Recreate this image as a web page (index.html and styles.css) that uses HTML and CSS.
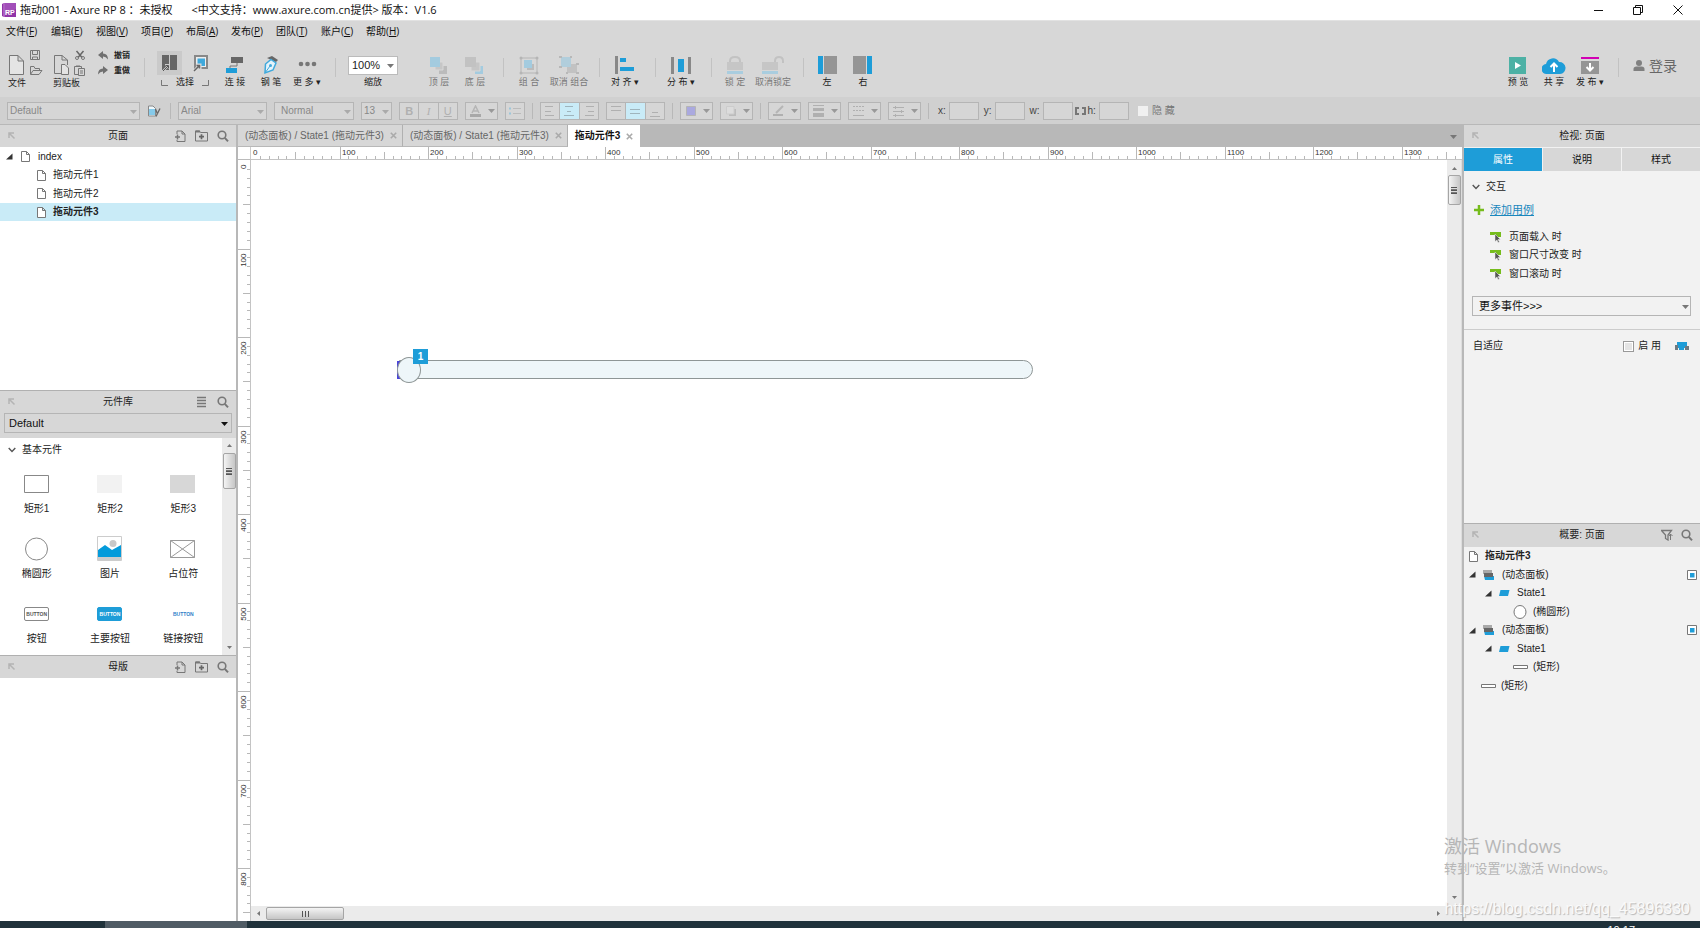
FILE: index.html
```html
<!DOCTYPE html>
<html lang="zh-CN">
<head>
<meta charset="utf-8">
<title>拖动001 - Axure RP 8</title>
<link rel="stylesheet" href="styles.css">
</head>
<body>
<svg class="defs" aria-hidden="true">
  <symbol id="page" viewBox="0 0 9 11"><path d="M.5.5H5.500L8.500 3.500V10.500H.5ZM5.500.5V3.500H8.500" fill="#fff" stroke="#777"/></symbol>
  <symbol id="pin" viewBox="0 0 8 8"><path d="M1 6V1H6M1.500 1.500L6.500 6.500" fill="none" stroke="#b4b4b4" stroke-width="1.500"/></symbol>
  <symbol id="search" viewBox="0 0 12 12"><circle cx="5" cy="5" r="3.800" fill="none" stroke="#777" stroke-width="1.600"/><path d="M7.800 7.800L11 11.300" stroke="#777" stroke-width="2"/></symbol>
  <symbol id="addpage" viewBox="0 0 12 12"><path d="M3 4V1H8L11 4V11.500H3V10M8 1V4H11" fill="none" stroke="#777"/><path d="M3.500 4.500V9.500M1 7H6" stroke="#777" stroke-width="1.500"/></symbol>
  <symbol id="addfolder" viewBox="0 0 13 12"><path d="M.5 11V1H4.500L5.500 2.500H12.500V11Z" fill="none" stroke="#777"/><path d="M.5 1.500H5" stroke="#777" stroke-width="2"/><path d="M6.500 4.200V9.200M4 6.700H9" stroke="#666" stroke-width="1.700"/></symbol>
  <symbol id="tri" viewBox="0 0 7 7"><path d="M6.500.5V6.500H0Z" fill="#333"/></symbol>
  <symbol id="chev" viewBox="0 0 8 6"><path d="M.7 1L4 4.500L7.300 1" fill="none" stroke="#555" stroke-width="1.400"/></symbol>
  <symbol id="down" viewBox="0 0 7 4"><path d="M0 0H7L3.500 4Z" fill="currentColor"/></symbol>
  <symbol id="panel" viewBox="0 0 12 10"><path d="M1 6H11V10H2Z" fill="#1e9dd8"/><path d="M0 0H9V4H0Z" fill="#aaa"/><path d="M1 3H10V7H1Z" fill="#666"/></symbol>
  <symbol id="state" viewBox="0 0 11 6"><path d="M1.500 0H10.500L9 6H0Z" fill="#1e9dd8"/></symbol>
  <symbol id="bar" viewBox="0 0 15 4"><path d="M.5.5H14.500V3.500H.5Z" fill="#fff" stroke="#777"/></symbol>
  <symbol id="event" viewBox="0 0 12 12"><path d="M0 1H11V6H6L5 4H0Z" fill="#76bc1c"/><path d="M5 3L10.500 8.500H8L9.500 11L8 11.500L7 9L5 10.500Z" fill="#555" stroke="#eee" stroke-width=".5"/></symbol>
  <symbol id="close" viewBox="0 0 7 7"><path d="M.8.8L6.200 6.200M6.200.8L.8 6.200" stroke="#aaa" stroke-width="1.600"/></symbol>
  <symbol id="shown" viewBox="0 0 10 10"><path d="M.5.5H9.500V9.500H.5Z" fill="#fff" stroke="#777"/><path d="M3 3H7.500V7.500H3Z" fill="#1e9dd8"/></symbol>
</svg>

<header class="titlebar">
  <svg class="logo" width="15" height="15" viewBox="0 0 15 15"><path d="M0 1L2 0H14V14H2L0 13Z" fill="#9034a8"/><path d="M2 0V14" stroke="#c98ad8"/><path d="M3 0H14V6L3 12Z" fill="#a24fb9"/><text x="3" y="12" class="logo-text">RP</text></svg>
  <span class="app-name">拖动001 - Axure RP 8 ：未授权</span>
  <span>&lt;中文支持：www.axure.com.cn提供&gt; 版本：V1.6</span>
  <div class="window-buttons">
    <button aria-label="最小化"><svg width="10" height="10"><path d="M1 5.500H10" stroke="#111"/></svg></button>
    <button aria-label="还原"><svg width="10" height="10"><path d="M.5 2.500H7.500V9.500H.5ZM2.500 2V.5H9.500V7.500H8" fill="none" stroke="#111"/></svg></button>
    <button aria-label="关闭"><svg width="10" height="10"><path d="M.5.5L9.500 9.500M9.500.5L.5 9.500" stroke="#111"/></svg></button>
  </div>
</header>

<nav class="menubar">
  <button>文件(<u>F</u>)</button><button>编辑(<u>E</u>)</button><button>视图(<u>V</u>)</button><button>项目(<u>P</u>)</button><button>布局(<u>A</u>)</button><button>发布(<u>P</u>)</button><button>团队(<u>T</u>)</button><button>账户(<u>C</u>)</button><button>帮助(<u>H</u>)</button>
</nav>

<div class="toolbar">
  <div class="file-group">
    <svg width="35" height="27" viewBox="0 0 35 27"><g fill="none" stroke="#777"><path d="M1.500 5.500H10L15.500 11V24.500H1.500ZM10 5.500V11H15.500" fill="#e4e4e4"/><path d="M22.500.5H31.500V9.500H22.500ZM24.500.5V4.500H29.500V.5M24.500 9V7H29.500V9"/><path d="M22.500 24V16.500H26L27 18.500H31.500V20.500M22.500 24.500L25 20.500H34L31 24.500Z"/></g></svg>
    <span>文件</span>
  </div>
  <div class="file-group">
    <svg width="35" height="27" viewBox="0 0 35 27"><g fill="none" stroke="#777"><path d="M1.500 5.500H9L14.500 10V15M8 23.500H1.500V5.500M9 5.500V10H14.500" /><path d="M8.500 14.500H12L15.500 18V24.500H8.500Z" fill="#e4e4e4"/><path d="M23.500 1L29 7.500M30.500 1L25 7.500" stroke="#666" stroke-width="1.500"/><circle cx="24" cy="8" r="1.500"/><circle cx="30" cy="8" r="1.500"/><path d="M25 24.500H21.500V16.500H28.500V18M25.500 18.500H31.500V25.500H25.500ZM27 21H30M27 23H30M23 16H27"/></g></svg>
    <span>剪贴板</span>
  </div>
  <div class="undo-group">
    <button><svg width="11" height="9"><path d="M0 4L5 0V2.500Q10 2.500 10 8.500Q8 5.500 5 5.500V8Z" fill="#707070"/></svg>撤销</button>
    <button><svg width="11" height="9"><path d="M10 4L5 0V2.500Q0 2.500 0 8.500Q2 5.500 5 5.500V8Z" fill="#707070"/></svg>重做</button>
  </div>
  <i class="sep"></i>
  <div class="select-group">
    <div class="modes">
      <button class="active" aria-label="相交选择"><svg width="16" height="18"><path d="M0 1H7V16H0Z" fill="#666"/><path d="M8 1H15V16H8Z" fill="#666"/><path d="M1 17L6 12M3 11H7V15" fill="none" stroke="#ccc" stroke-width="2"/><path d="M1 17L6 12M3.500 11.500H6.500V14.500" fill="none" stroke="#555"/></svg></button>
      <button aria-label="包含选择"><svg width="16" height="18"><path d="M2 2H14V14H2Z" fill="#eee" stroke="#888" stroke-width="2"/><path d="M4.500 4.500H12V12H4.500Z" fill="#3fa9dc"/><path d="M1 17L6 12M3 11H7V15" fill="none" stroke="#ddd" stroke-width="3"/><path d="M1 17L6 12M3.500 11.500H6.500V14.500" fill="none" stroke="#666" stroke-width="1.500"/></svg></button>
    </div>
    <div class="bracket"><svg width="7" height="6"><path d="M.5 0V5.500H7" fill="none" stroke="#777"/></svg><span>选择</span><svg width="7" height="6"><path d="M0 5.500H6.500V0" fill="none" stroke="#777"/></svg></div>
  </div>
  <button class="tool"><svg width="20" height="20"><path d="M6 1H18V7H6Z" fill="#666"/><path d="M12 7V10H5V12" fill="none" stroke="#777"/><path d="M1 12H12V17H1Z" fill="#1e9dd8"/></svg><span>连 接</span></button>
  <button class="tool"><svg width="20" height="20"><path d="M6 2L11 0L17 4L15 6Z" fill="#666"/><path d="M10 3.500L15 7L12 14L4 17L4.500 8Z" fill="#e5f3fa" stroke="#3fa9dc" stroke-width="1.500"/><path d="M4 17L9 10" stroke="#3fa9dc"/><circle cx="9.500" cy="9.500" r="1.500" fill="#3fa9dc"/></svg><span>钢 笔</span></button>
  <button class="tool"><svg width="20" height="20"><g fill="#777"><circle cx="4" cy="8" r="2.300"/><circle cx="10.500" cy="8" r="2.300"/><circle cx="17" cy="8" r="2.300"/></g></svg><span>更 多 ▾</span></button>
  <i class="sep"></i>
  <label class="zoom"><select><option>100%</option></select><svg class="caret" width="7" height="4"><use href="#down"/></svg><span>缩放</span></label>
  <button class="tool off order-first" disabled><svg width="20" height="20"><path d="M10 10H18V18H10Z" fill="#bbb"/><path d="M6 6H14V14H6Z" fill="#c6c6c6" stroke="#d8d8d8"/><path d="M1 1H11V11H1Z" fill="#a3cbdf"/></svg><span>顶 层</span></button>
  <button class="tool off" disabled><svg width="20" height="20"><path d="M10 10H18V18H10Z" fill="#a3cbdf"/><path d="M6 6H15V15H6Z" fill="#c6c6c6" stroke="#d8d8d8"/><path d="M0 1H11V11H0Z" fill="#c2c2c2"/></svg><span>底 层</span></button>
  <i class="sep"></i>
  <button class="tool wide off" disabled><svg width="20" height="20"><path d="M2 2H18V17H2Z" fill="none" stroke="#b5b5b5"/><path d="M8 8H15V14H8Z" fill="#bbb"/><path d="M5 4H13V12H5Z" fill="#a3cbdf"/><g fill="#b5b5b5"><circle cx="2" cy="2" r="1.500"/><circle cx="18" cy="2" r="1.500"/><circle cx="2" cy="17" r="1.500"/><circle cx="18" cy="17" r="1.500"/></g></svg><span>组 合</span></button>
  <button class="tool wide off" disabled><svg width="20" height="20"><path d="M8 8H18V17H8Z" fill="#c2c2c2"/><path d="M2 1H12V11H2Z" fill="#b1cedc"/><g fill="#b8b8b8"><path d="M0 0H3V2H0ZM11 0H13V2H11ZM0 10H3V12H0ZM17 7H20V9H17ZM17 16H20V18H17ZM7 16H9V18H7Z"/></g></svg><span>取消 组合</span></button>
  <i class="sep"></i>
  <button class="tool wide"><svg width="20" height="20"><path d="M0 0H3V18H0Z" fill="#888"/><path d="M5 2H11V6H5ZM5 11H19V15H5Z" fill="#1e9dd8"/></svg><span>对 齐 ▾</span></button>
  <i class="sep"></i>
  <button class="tool wide"><svg width="20" height="20"><path d="M0 1H3V18H0ZM17 1H20V18H17Z" fill="#888"/><path d="M7 3H13V16H7Z" fill="#1e9dd8"/></svg><span>分 布 ▾</span></button>
  <i class="sep"></i>
  <button class="tool off" disabled><svg width="20" height="20"><path d="M5 7V5Q5 1 10 1T15 5V7" fill="none" stroke="#c2c2c2" stroke-width="2"/><path d="M2 6H18V14H2Z" fill="#c6c6c6"/><path d="M2 15H18V18H2Z" fill="#a9cddf"/></svg><span>锁 定</span></button>
  <button class="tool wide off" disabled><svg width="22" height="20"><path d="M13 7V5Q13 1 17 1T21 5V7" fill="none" stroke="#c2c2c2" stroke-width="2"/><path d="M0 6H16V14H0Z" fill="#c6c6c6"/><path d="M0 15H16V18H0Z" fill="#a9cddf"/></svg><span>取消锁定</span></button>
  <i class="sep"></i>
  <button class="tool"><svg width="20" height="20"><path d="M1 0H6V18H1Z" fill="#1e9dd8"/><path d="M7 0H20V18H7Z" fill="#959595"/></svg><span>左</span></button>
  <button class="tool"><svg width="20" height="20"><path d="M14 0H19V18H14Z" fill="#1e9dd8"/><path d="M0 0H13V18H0Z" fill="#959595"/></svg><span>右</span></button>
  <div class="publish">
    <button class="tool"><svg width="18" height="20"><path d="M0 1H17V18H0Z" fill="#4db1a5"/><path d="M6 6L12 9.500L6 13Z" fill="#fff"/></svg><span>预 览</span></button>
    <button class="tool"><svg width="24" height="20"><path d="M5 18A5 5 0 0 1 4 8A7 7 0 0 1 17 6A6 6 0 0 1 18 18Z" fill="#1e9dd8"/><path d="M12 16V8M8.500 11L12 7.500L15.500 11" fill="none" stroke="#fff" stroke-width="2"/></svg><span>共 享</span></button>
    <button class="tool"><svg width="18" height="20"><path d="M0 1H18V3H0Z" fill="#d200b4"/><path d="M0 5H18V18H0Z" fill="#959595"/><path d="M9 7V14M5.500 11L9 14.500L12.500 11" fill="none" stroke="#fff" stroke-width="2"/></svg><span>发 布 ▾</span></button>
    <i class="sep"></i>
    <button class="login"><svg width="12" height="12"><circle cx="6" cy="3" r="3" fill="#808080"/><path d="M.5 11V9Q.5 6.500 3.500 6.500H8.500Q11.500 6.500 11.500 9V11Z" fill="#808080"/></svg>登录</button>
  </div>
</div>

<div class="stylebar">
  <span class="pick w-style"><select disabled aria-label="样式"><option>Default</option></select><svg class="caret" width="7" height="4"><use href="#down"/></svg></span>
  <button class="bare" aria-label="管理样式"><svg width="14" height="12"><path d="M1.500 1H6L8.500 3.500V11H1.500Z" fill="#eef7fb" stroke="#888"/><path d="M2 5H8M2 7H8M2 9H8" stroke="#1e9dd8"/><path d="M8.500 4L10.500 9M13 3.500L9 11.500" stroke="#666" stroke-width="1.300"/></svg></button>
  <i class="sep"></i>
  <span class="pick w-font"><select disabled aria-label="字体"><option>Arial</option></select><svg class="caret" width="7" height="4"><use href="#down"/></svg></span>
  <span class="pick w-weight"><select disabled aria-label="字形"><option>Normal</option></select><svg class="caret" width="7" height="4"><use href="#down"/></svg></span>
  <span class="pick w-size"><select disabled aria-label="字号"><option>13</option></select><svg class="caret" width="7" height="4"><use href="#down"/></svg></span>
  <div class="trio"><button disabled><b>B</b></button><button disabled><em>I</em></button><button disabled><u>U</u></button></div>
  <button class="drop" disabled aria-label="文字颜色"><svg width="12" height="12"><path d="M2 8L5.500 1L9 8M3.500 6H8" fill="none" stroke="#b5b5b5" stroke-width="1.500"/><path d="M0 9H11V12H0Z" fill="#a8a8a8"/></svg><svg width="7" height="4"><use href="#down"/></svg></button>
  <button class="box" disabled aria-label="项目符号"><svg width="12" height="10"><path d="M4 2.500H12M4 7.500H12" stroke="#bbb"/><path d="M0 2.500H2M0 7.500H2" stroke="#9cc6da" stroke-width="2"/></svg></button>
  <i class="sep"></i>
  <div class="trio">
    <button disabled aria-label="左对齐"><svg width="12" height="12"><path d="M1 1.500H9M1 6.500H7M1 10.500H10" stroke="#b0b0b0"/></svg></button>
    <button disabled class="on" aria-label="居中"><svg width="12" height="12"><path d="M2 1.500H10M4 6.500H8M1 10.500H11" stroke="#9fb4bc"/></svg></button>
    <button disabled aria-label="右对齐"><svg width="12" height="12"><path d="M3 1.500H11M5 6.500H11M2 10.500H11" stroke="#b0b0b0"/></svg></button>
  </div>
  <div class="trio">
    <button disabled aria-label="顶部对齐"><svg width="12" height="12"><path d="M1 1.500H11M1 5.500H11" stroke="#b0b0b0"/></svg></button>
    <button disabled class="on" aria-label="垂直居中"><svg width="12" height="12"><path d="M1 4.500H11M1 8.500H11" stroke="#9fb4bc"/></svg></button>
    <button disabled aria-label="底部对齐"><svg width="12" height="12"><path d="M3 7.500H9M1 11.500H11" stroke="#b0b0b0"/></svg></button>
  </div>
  <i class="sep"></i>
  <button class="drop" disabled aria-label="填充"><svg width="12" height="12"><path d="M1.500 1.500H10.500V10.500H1.500Z" fill="#aaa9df" stroke="#b5b5b5"/></svg><svg width="7" height="4"><use href="#down"/></svg></button>
  <button class="drop" disabled aria-label="阴影"><svg width="12" height="12"><path d="M4 4H11V11H4Z" fill="#bcbcbc"/><path d="M1.500 1.500H9V9H1.500Z" fill="#dcdcdc" stroke="#ccc"/></svg><svg width="7" height="4"><use href="#down"/></svg></button>
  <i class="sep"></i>
  <button class="drop" disabled aria-label="线条颜色"><svg width="12" height="12"><path d="M3 8L10 1" stroke="#b5b5b5" stroke-width="2"/><path d="M0 9H10V11H0Z" fill="#b0b0b0"/></svg><svg width="7" height="4"><use href="#down"/></svg></button>
  <button class="drop" disabled aria-label="线宽"><svg width="12" height="12"><path d="M0 0H11V1H0ZM0 3H11V6H0ZM0 8H11V12H0Z" fill="#b0b0b0"/></svg><svg width="7" height="4"><use href="#down"/></svg></button>
  <button class="drop" disabled aria-label="线型"><svg width="12" height="12"><path d="M0 1.500H11M0 5.500H11" stroke="#b0b0b0" stroke-dasharray="2 1"/><path d="M0 10.500H11" stroke="#b0b0b0"/></svg><svg width="7" height="4"><use href="#down"/></svg></button>
  <button class="drop" disabled aria-label="箭头"><svg width="12" height="12"><path d="M0 2.500H11M0 6.500H11M0 10.500H11M2.500 1V4M8.500 5V8M2.500 9V12" stroke="#b0b0b0"/></svg><svg width="7" height="4"><use href="#down"/></svg></button>
  <i class="sep"></i>
  <div class="coords">
    <label>x:<input disabled></label><label>y:<input disabled></label><label>w:<input disabled></label>
    <svg width="11" height="8"><path d="M4 1H1V7H4M7 1H10V7H7" fill="none" stroke="#777" stroke-width="2"/></svg>
    <label>h:<input disabled></label>
  </div>
  <label class="hide-opt"><input type="checkbox" disabled>隐 藏</label>
</div>

<main class="workspace">
  <aside class="left">
    <section class="pages">
      <div class="panel-head"><svg width="8" height="8"><use href="#pin"/></svg><h2>页面</h2><div class="acts"><button aria-label="添加页面"><svg width="12" height="12"><use href="#addpage"/></svg></button><button aria-label="添加文件夹"><svg width="13" height="12"><use href="#addfolder"/></svg></button><button aria-label="搜索"><svg width="12" height="12"><use href="#search"/></svg></button></div></div>
      <ul class="tree">
        <li><svg width="7" height="7"><use href="#tri"/></svg><svg width="9" height="11"><use href="#page"/></svg>index</li>
        <li class="child"><svg width="9" height="11"><use href="#page"/></svg>拖动元件1</li>
        <li class="child"><svg width="9" height="11"><use href="#page"/></svg>拖动元件2</li>
        <li class="child current"><svg width="9" height="11"><use href="#page"/></svg>拖动元件3</li>
      </ul>
    </section>
    <section class="library">
      <div class="panel-head"><svg width="8" height="8"><use href="#pin"/></svg><h2>元件库</h2><div class="acts"><button aria-label="菜单"><svg width="12" height="12"><path d="M1 1.500H10M1 4.500H10M1 7.500H10M1 10.500H10" stroke="#777" stroke-width="1.500"/></svg></button><button aria-label="搜索"><svg width="12" height="12"><use href="#search"/></svg></button></div></div>
      <div class="lib-pick"><select aria-label="元件库"><option>Default</option></select><svg class="caret" width="7" height="4"><use href="#down"/></svg></div>
      <div class="lib-body">
        <div class="lib-main">
          <h3><svg width="8" height="6"><use href="#chev"/></svg>基本元件</h3>
          <div class="widgets">
            <div><svg width="26" height="26"><path d="M.5 4.500H24.500V21.500H.5Z" fill="#fff" stroke="#888"/></svg>矩形1</div>
            <div><svg width="26" height="26"><path d="M0 4H25V22H0Z" fill="#f2f2f2"/></svg>矩形2</div>
            <div><svg width="26" height="26"><path d="M0 4H25V22H0Z" fill="#d7d7d7"/></svg>矩形3</div>
            <div><svg width="26" height="26"><circle cx="12.500" cy="13" r="11" fill="#fff" stroke="#888"/></svg>椭圆形</div>
            <div><svg width="26" height="26"><path d="M.5.5H24.500V24.500H.5Z" fill="#fff" stroke="#ccc"/><path d="M1 21H24V25H1Z" fill="#ccc"/><circle cx="16" cy="7.500" r="3.500" fill="#c8c8c8"/><path d="M1 14L8 9L15 14L24 9V21H1Z" fill="#049bdb"/></svg>图片</div>
            <div><svg width="26" height="26"><path d="M.5 4.500H24.500V21.500H.5ZM.5 4.500L24.500 21.500M24.500 4.500L.5 21.500" fill="#fff" stroke="#999"/></svg>占位符</div>
            <div><span class="mini">BUTTON</span>按钮</div>
            <div><span class="mini primary">BUTTON</span>主要按钮</div>
            <div><span class="mini link">BUTTON</span>链接按钮</div>
          </div>
        </div>
        <div class="scroll-v"><svg width="5" height="4"><path d="M0 4H5L2.500 1Z" fill="#777"/></svg><span class="thumb"></span><svg class="end" width="5" height="4"><path d="M0 0H5L2.500 3Z" fill="#777"/></svg></div>
      </div>
    </section>
    <section class="masters">
      <div class="panel-head"><svg width="8" height="8"><use href="#pin"/></svg><h2>母版</h2><div class="acts"><button aria-label="添加母版"><svg width="12" height="12"><use href="#addpage"/></svg></button><button aria-label="添加文件夹"><svg width="13" height="12"><use href="#addfolder"/></svg></button><button aria-label="搜索"><svg width="12" height="12"><use href="#search"/></svg></button></div></div>
    </section>
  </aside>

  <section class="editor">
    <div class="tabs">
      <button>(动态面板) / State1 (拖动元件3)<svg width="7" height="7"><use href="#close"/></svg></button>
      <button>(动态面板) / State1 (拖动元件3)<svg width="7" height="7"><use href="#close"/></svg></button>
      <button class="open">拖动元件3<svg width="7" height="7"><use href="#close"/></svg></button>
      <svg class="tab-menu" width="7" height="4"><use href="#down"/></svg>
    </div>
    <div class="stage">
      <div class="corner"></div>
      <div class="ruler-h"><svg id="ruler-h"></svg></div>
      <div class="ruler-v"><svg id="ruler-v"></svg></div>
      <div class="canvas">
        <div class="track"></div>
        <div class="focus-mark"></div>
        <div class="knob-bg"><div class="knob"></div></div>
        <span class="badge">1</span>
      </div>
      <div class="scroll-v tall"><svg width="5" height="4"><path d="M0 4H5L2.500 1Z" fill="#777"/></svg><span class="thumb"></span><svg class="end" width="5" height="4"><path d="M0 0H5L2.500 3Z" fill="#777"/></svg></div>
      <div class="scroll-h"><svg width="4" height="5"><path d="M4 0V5L1 2.500Z" fill="#777"/></svg><span class="thumb"></span><svg class="end" width="4" height="5"><path d="M0 0V5L3 2.500Z" fill="#777"/></svg></div>
    </div>
  </section>

  <aside class="right">
    <section class="inspector">
      <div class="panel-head"><svg width="8" height="8"><use href="#pin"/></svg><h2>检视: 页面</h2></div>
      <div class="modes-tabs"><button class="open">属性</button><button>说明</button><button>样式</button></div>
      <h3><svg width="8" height="6"><use href="#chev"/></svg>交互</h3>
      <div class="add-case"><svg width="10" height="10"><path d="M5 0V10M0 5H10" stroke="#76bc1c" stroke-width="2.500"/></svg><a href="#">添加用例</a></div>
      <ul class="events">
        <li><svg width="12" height="12"><use href="#event"/></svg>页面载入 时</li>
        <li><svg width="12" height="12"><use href="#event"/></svg>窗口尺寸改变 时</li>
        <li><svg width="12" height="12"><use href="#event"/></svg>窗口滚动 时</li>
      </ul>
      <div class="more-events"><select aria-label="更多事件"><option>更多事件&gt;&gt;&gt;</option></select><svg class="caret" width="7" height="4"><use href="#down"/></svg></div>
      <div class="adaptive"><span>自适应</span><label><input type="checkbox">启 用</label><svg width="14" height="9"><path d="M2 0H12V6H9V8H4V6H2Z" fill="#1e9dd8"/><path d="M0 3H3V8H0ZM10 4H14V8H10Z" fill="#707a80"/></svg></div>
    </section>
    <section class="outline">
      <div class="panel-head"><svg width="8" height="8"><use href="#pin"/></svg><h2>概要: 页面</h2><div class="acts"><button aria-label="筛选"><svg width="12" height="12"><path d="M.5 1.500H10.500L7 6V11L4.500 9.500V6Z" fill="none" stroke="#777" stroke-width="1.300"/><path d="M9.500 11V5M8 7L9.500 5L11.500 7" fill="none" stroke="#777"/></svg></button><button aria-label="搜索"><svg width="12" height="12"><use href="#search"/></svg></button></div></div>
      <ul class="tree">
        <li><svg width="9" height="11"><use href="#page"/></svg><b>拖动元件3</b></li>
        <li><svg width="7" height="7"><use href="#tri"/></svg><svg width="12" height="10"><use href="#panel"/></svg>(动态面板)<svg class="shown" width="10" height="10"><use href="#shown"/></svg></li>
        <li class="l2"><svg width="7" height="7"><use href="#tri"/></svg><svg width="11" height="6"><use href="#state"/></svg>State1</li>
        <li class="l3"><svg width="15" height="14"><ellipse cx="7" cy="7" rx="6" ry="6.500" fill="#fff" stroke="#777"/></svg>(椭圆形)</li>
        <li><svg width="7" height="7"><use href="#tri"/></svg><svg width="12" height="10"><use href="#panel"/></svg>(动态面板)<svg class="shown" width="10" height="10"><use href="#shown"/></svg></li>
        <li class="l2"><svg width="7" height="7"><use href="#tri"/></svg><svg width="11" height="6"><use href="#state"/></svg>State1</li>
        <li class="l3"><svg width="15" height="4"><use href="#bar"/></svg>(矩形)</li>
        <li class="l1"><svg width="15" height="4"><use href="#bar"/></svg>(矩形)</li>
      </ul>
    </section>
  </aside>
</main>

<footer class="taskbar"><div class="task"></div><time>10:17</time></footer>
<div class="activate"><p>激活 Windows</p><small>转到“设置”以激活 Windows。</small></div>
<div class="credit">https://blog.csdn.net/qq_45896330</div>
<script src="ruler.js"></script>
</body>
</html>
```
FILE: styles.css
```css
* { box-sizing: border-box; }
body {
  margin: 0; height: 100vh; display: flex; flex-direction: column; overflow: hidden;
  background: #d7d7d7; color: #222;
  font: 10px/14px "Liberation Sans", "Noto Sans CJK SC", sans-serif;
}
button, input, select { font: inherit; color: inherit; margin: 0; }
button { border: 0; padding: 0; background: none; white-space: nowrap; }
select { appearance: none; border: 0; border-radius: 0; background: none; width: 100%; padding: 0; opacity: 1; }
svg { display: block; flex: none; }
ul, h2, h3, p { margin: 0; padding: 0; list-style: none; font-size: inherit; font-weight: normal; }
.defs { position: absolute; width: 0; height: 0; }

.titlebar {
  flex: none; height: 21px; display: flex; align-items: center; padding-left: 2px;
  background: #fff; border-bottom: 1px solid #e2e2e2; color: #111; white-space: pre;
  font: 11px/20px "Open Sans", "Noto Sans CJK SC", sans-serif;
}
.logo { margin-right: 3px; }
.logo-text { font: bold 7px "Liberation Sans", sans-serif; fill: #fff; }
.app-name { margin-right: 19px; }
.window-buttons { margin-left: auto; padding-right: 2px; display: flex; }
.window-buttons button { width: 40px; display: flex; justify-content: center; }

.menubar { flex: none; display: flex; height: 20px; align-items: center; padding-left: 6px; gap: 11px; color: #111; font-family: "Open Sans", "Noto Sans CJK SC", sans-serif; }
.menubar button { width: 34px; text-align: left; }

.toolbar { flex: none; display: flex; align-items: flex-start; height: 56px; padding: 9px 23px 0 8px; font-size: 9px; line-height: 11px; color: #222; }
.file-group { width: 35px; margin-right: 10px; }
.file-group span { display: block; margin-top: 1px; }
.undo-group { width: 36px; display: flex; flex-direction: column; gap: 4px; }
.undo-group button { display: flex; align-items: center; gap: 5px; font-size: 8px; line-height: 11px; font-weight: bold; }
.sep { flex: none; width: 1px; height: 19px; background: #c2c2c2; }
.toolbar .sep { margin: 8px 5px 0 10px; }
.select-group { width: 60px; padding: 1px 4px 0 0; margin-left: 7px; }
.modes { display: flex; gap: 6px; }
.modes button { width: 26px; height: 24px; display: grid; place-items: center; }
.modes .active { background: #cacaca; }
.bracket { display: flex; align-items: center; justify-content: space-between; padding: 2px 4px 0; }
.tool { width: 36px; padding-top: 6px; display: flex; flex-direction: column; align-items: center; }
.tool span { margin-top: 1px; line-height: 11px; }
.tool.wide { width: 40px; }
.tool.off { color: #777; }
.order-first { margin-left: 23px; }
.zoom { position: relative; width: 50px; margin: 6px 0 0 7px; text-align: center; }
.zoom select { height: 19px; padding-left: 3px; background: #fff; border: 1px solid #bbb; font-size: 11px; display: block; }
.zoom span { display: block; margin-top: 2px; }
.caret { position: absolute; right: 4px; top: 8px; color: #777; pointer-events: none; }
.publish { margin-left: auto; display: flex; align-items: flex-start; }
.login { display: flex; align-items: center; gap: 4px; margin: 7px 0 0 9px; font-size: 14px; line-height: 18px; color: #666; }

.stylebar { flex: none; height: 28px; display: flex; align-items: center; gap: 7px; padding: 0 7px; background: #d0d0d0; border-bottom: 1px solid #b8b8b8; color: #999; }
.stylebar .sep { height: 16px; background: #b8b8b8; }
.pick { position: relative; height: 18px; border: 1px solid #b5b5b5; background: #d6d6d6; color: #888; }
.pick select { height: 16px; padding-left: 2px; display: block; }
.pick .caret { top: 7px; right: 2px; color: #aaa; }
.w-style { width: 133px; }
.w-font { width: 89px; }
.w-weight { width: 80px; }
.w-weight select { padding-left: 6px; }
.w-size { width: 31px; }
.bare { width: 16px; }
.trio { display: flex; border: 1px solid #b5b5b5; height: 18px; background: #d6d6d6; width: 59px; }
.trio button { flex: 1; display: grid; place-items: center; color: #b0b0b0; font-size: 11px; }
.trio button + button { border-left: 1px solid #b5b5b5; }
.trio .on { background: #c9ebf7; }
.trio em { font-family: "Liberation Serif", serif; }
.drop { width: 33px; height: 18px; border: 1px solid #b5b5b5; background: #d6d6d6; display: flex; align-items: center; justify-content: space-between; padding: 0 2px 0 4px; color: #999; }
.box { width: 20px; height: 18px; border: 1px solid #b5b5b5; background: #d6d6d6; display: grid; place-items: center; }
.coords { display: flex; align-items: center; gap: 5px; padding-left: 2px; color: #444; }
.coords label { display: flex; align-items: center; gap: 3px; }
.coords input { width: 30px; height: 18px; border: 1px solid #b5b5b5; background: #d6d6d6; padding: 0; }
.coords svg { margin: 0 -3px; }
.hide-opt { display: flex; align-items: center; gap: 4px; margin-left: 2px; color: #777; }
.hide-opt input { appearance: none; width: 10px; height: 10px; background: #f0f0f0; }

.workspace { flex: 1; min-height: 0; display: grid; grid-template-columns: 238px minmax(0, 1fr) 238px; }
.left { display: flex; flex-direction: column; border-right: 2px solid #b8b8b8; background: #fff; min-height: 0; }
.panel-head { position: relative; display: flex; align-items: center; height: 22px; padding: 0 8px; background: #d7d7d7; }
.panel-head h2 { flex: 1; text-align: center; margin-left: -8px; }
.acts { position: absolute; right: 7px; display: flex; gap: 9px; }
.pages, .masters { flex: 1 1 0; }
.library { border-top: 1px solid #b0b0b0; }
.masters { border-top: 1px solid #b0b0b0; }
.tree li { display: flex; align-items: center; height: 19px; padding-left: 5px; gap: 7px; }
.tree li:nth-child(even) { height: 18px; }
.left .tree li { padding-left: 6px; gap: 8px; }
.left .tree .child { padding-left: 37px; gap: 7px; }
.tree .current { background: #c9ebf7; font-weight: bold; }

.lib-pick { position: relative; background: #d7d7d7; padding: 0 4px 5px; font-size: 11px; }
.lib-pick select { display: block; height: 20px; border: 1px solid #b5b5b5; padding-left: 4px; color: #111; }
.lib-pick .caret { color: #111; right: 8px; top: 9px; }
.lib-body { display: flex; }
.lib-main { flex: 1; }
h3 { display: flex; align-items: center; gap: 6px; padding-left: 8px; height: 24px; }
.widgets { display: grid; grid-template: 65px 65px 63px / repeat(3, 1fr); padding-right: 2px; }
.widgets div { display: flex; flex-direction: column; align-items: center; padding-top: 8px; line-height: 14px; gap: 5px; }
.widgets div svg { height: 26px; margin-top: 1px; }
.mini { width: 25px; height: 14px; margin: 7px 0 6px; border: 1px solid #888; border-radius: 2px; display: grid; place-items: center; font-size: 5px; line-height: 12px; font-weight: bold; color: #555; }
.primary { background: #1e9dd8; border-color: #1e9dd8; color: #fff; }
.link { border-color: transparent; color: #2f7fc9; }

.scroll-v { width: 14px; background: #ebebeb; display: flex; flex-direction: column; align-items: center; padding: 5px 0; gap: 6px; }
.thumb { display: grid; place-items: center; border: 1px solid #a5a5a5; border-radius: 2px; background: linear-gradient(90deg, #f4f4f4, #dcdcdc 50%, #c6c6c6); }
.scroll-v .thumb { width: 13px; height: 36px; }
.scroll-v .thumb::after { content: ""; width: 6px; height: 7px; background: repeating-linear-gradient(#555 0 1px, #ddd 1px 2px, #777 2px 3px); }
.scroll-v .end { margin-top: auto; }

.editor { display: flex; flex-direction: column; min-width: 0; min-height: 0; background: #fff; }
.tabs { flex: none; height: 22px; display: flex; background: #b8b8b8; }
.tabs button { display: flex; align-items: center; gap: 6px; padding: 0 5px 0 7px; background: #d7d7d7; color: #666; border-right: 1px solid #b0b0b0; border-bottom: 1px solid #b8b8b8; }
.tabs .open { padding-right: 7px; background: #fff; color: #111; font-weight: bold; border: 0; }
.tab-menu { margin: 10px 5px 0 auto; color: #777; }
.stage { flex: 1; min-height: 0; display: grid; grid-template: 13px minmax(0, 1fr) 15px / 13px minmax(0, 1fr) 15px; }
.corner { border-right: 1px solid #ccc; border-bottom: 1px solid #bbb; }
.ruler-h { grid-column: 2 / 4; border-bottom: 1px solid #c4c4c4; overflow: hidden; }
.ruler-v { grid-row: 2 / 4; grid-column: 1; border-right: 1px solid #c4c4c4; overflow: hidden; }
.ruler-h svg, .ruler-v svg { width: 100%; height: 100%; }
.ruler-h line, .ruler-v line { stroke: #b8b8b8; shape-rendering: crispEdges; }
.ruler-h text, .ruler-v text { font-size: 8px; fill: #333; }
.canvas { position: relative; grid-area: 2 / 2; overflow: hidden; }
.track { position: absolute; left: 148px; top: 200px; width: 634px; height: 19px; background: #eef6f9; border: 1px solid #8e9696; border-radius: 0 10px 10px 0; }
.focus-mark { position: absolute; left: 146px; top: 201px; width: 3px; height: 18px; background: #4b46d8; }
.knob-bg { position: absolute; left: 146px; top: 197px; width: 24px; height: 26px; }
.knob { height: 100%; background: #eef6f9; border: 1px solid #8e9696; border-radius: 50%; }
.badge { position: absolute; left: 162px; top: 189px; width: 15px; height: 15px; background: #1e9dd8; color: #fff; font: bold 10px/15px "Liberation Sans", sans-serif; text-align: center; }
.tall { grid-area: 2 / 3; border-right: 1px solid #ddd; width: auto; gap: 5px; padding: 6px 0; }
.tall .thumb { height: 30px; }
.scroll-h { grid-area: 3 / 2 / 4 / 4; background: #ebebeb; display: flex; align-items: center; padding: 0 21px 0 5px; gap: 6px; }
.scroll-h .thumb { width: 78px; height: 13px; background: linear-gradient(#f4f4f4, #dcdcdc 50%, #c6c6c6); }
.scroll-h .thumb::after { content: ""; width: 7px; height: 6px; background: repeating-linear-gradient(90deg, #555 0 1px, transparent 1px 3px); }
.scroll-h .end { margin-left: auto; }

.right { border-left: 2px solid #b8b8b8; background: #f2f2f2; display: flex; flex-direction: column; min-height: 0; }
.inspector, .outline { flex: 1 1 0; min-height: 0; }
.outline { border-top: 1px solid #b0b0b0; }
.outline .panel-head { height: 23px; }
.outline .acts { gap: 8px; }
.modes-tabs { display: grid; grid-template-columns: repeat(3, 1fr); gap: 1px; margin-top: 1px; }
.modes-tabs button { height: 23px; background: #d7d7d7; color: #111; }
.modes-tabs .open { background: #1e9dd8; color: #fff; }
.inspector h3 { height: 20px; margin-top: 6px; }
.add-case { display: flex; align-items: center; gap: 6px; padding-left: 10px; height: 26px; font-size: 11px; }
.add-case a { color: #1a87bd; }
.events { padding: 4px 0 0 26px; }
.events li { display: flex; align-items: center; gap: 7px; height: 19px; }
.events li:nth-child(even) { height: 18px; }
.more-events { position: relative; margin: 13px 9px 13px 8px; font-size: 11px; }
.more-events select { display: block; height: 20px; border: 1px solid #b5b5b5; padding-left: 6px; color: #111; }
.more-events .caret { right: 2px; top: 9px; }
.adaptive { border-top: 1px solid #ccc; display: flex; align-items: center; padding: 9px 11px 0 9px; }
.adaptive label { margin-left: auto; margin-right: 14px; display: flex; align-items: center; gap: 4px; }
.adaptive input { appearance: none; width: 11px; height: 11px; border: 1px solid #999; background: #e4e4e4; box-shadow: inset 0 0 0 1px #fff; }
.outline .tree .l1 { padding-left: 17px; gap: 5px; }
.outline .tree .l2 { padding-left: 21px; }
.outline .tree .l3 { padding-left: 49px; gap: 5px; }
.shown { margin: 0 3px 0 auto; }

.taskbar { position: relative; flex: none; height: 7px; background: #20323b; overflow: hidden; display: flex; padding-left: 105px; }
.task { width: 142px; background: #505c65; }
.taskbar time { margin: 2px 65px 0 auto; font-size: 11px; line-height: 14px; color: #fff; }
.activate { position: absolute; right: 83px; bottom: 50px; width: 173px; color: #b6b6b6; font: 13px/20px "Open Sans", "Noto Sans CJK SC", sans-serif; white-space: nowrap; }
.activate p { font-size: 18px; line-height: 24px; }
.activate small { font-size: 13px; }
.credit { position: absolute; right: 10px; bottom: 8px; font-size: 16px; line-height: 22px; color: #fafafa; text-shadow: 1px 1px 1px #b5b5b5; }
```
FILE: ruler.js
```js
// Draws both canvas rulers: one tick every 10 units, a label every 100.
const SCALE = 0.885;
const NS = "http://www.w3.org/2000/svg";

function add(parent, name, attrs, text) {
  const node = document.createElementNS(NS, name);
  for (const key in attrs) node.setAttribute(key, attrs[key]);
  if (text !== undefined) node.textContent = text;
  parent.appendChild(node);
}

function drawRuler(id, vertical) {
  const svg = document.getElementById(id);
  const length = vertical ? svg.clientHeight : svg.clientWidth;
  for (let unit = 0; unit * SCALE < length; unit += 10) {
    const at = Math.round(unit * SCALE) + 0.5;
    const start = unit % 100 === 0 ? 0 : unit % 50 === 0 ? 5 : 9;
    if (unit > 0) {
      add(svg, "line", vertical
        ? { x1: start, x2: 13, y1: at, y2: at }
        : { x1: at, x2: at, y1: start, y2: 13 });
    }
    if (unit % 100 === 0) {
      add(svg, "text", vertical
        ? { transform: `translate(8 ${at + 4}) rotate(-90)`, "text-anchor": "end" }
        : { x: at + 1.5, y: 8 }, unit);
    }
  }
}

drawRuler("ruler-h", false);
drawRuler("ruler-v", true);
```
